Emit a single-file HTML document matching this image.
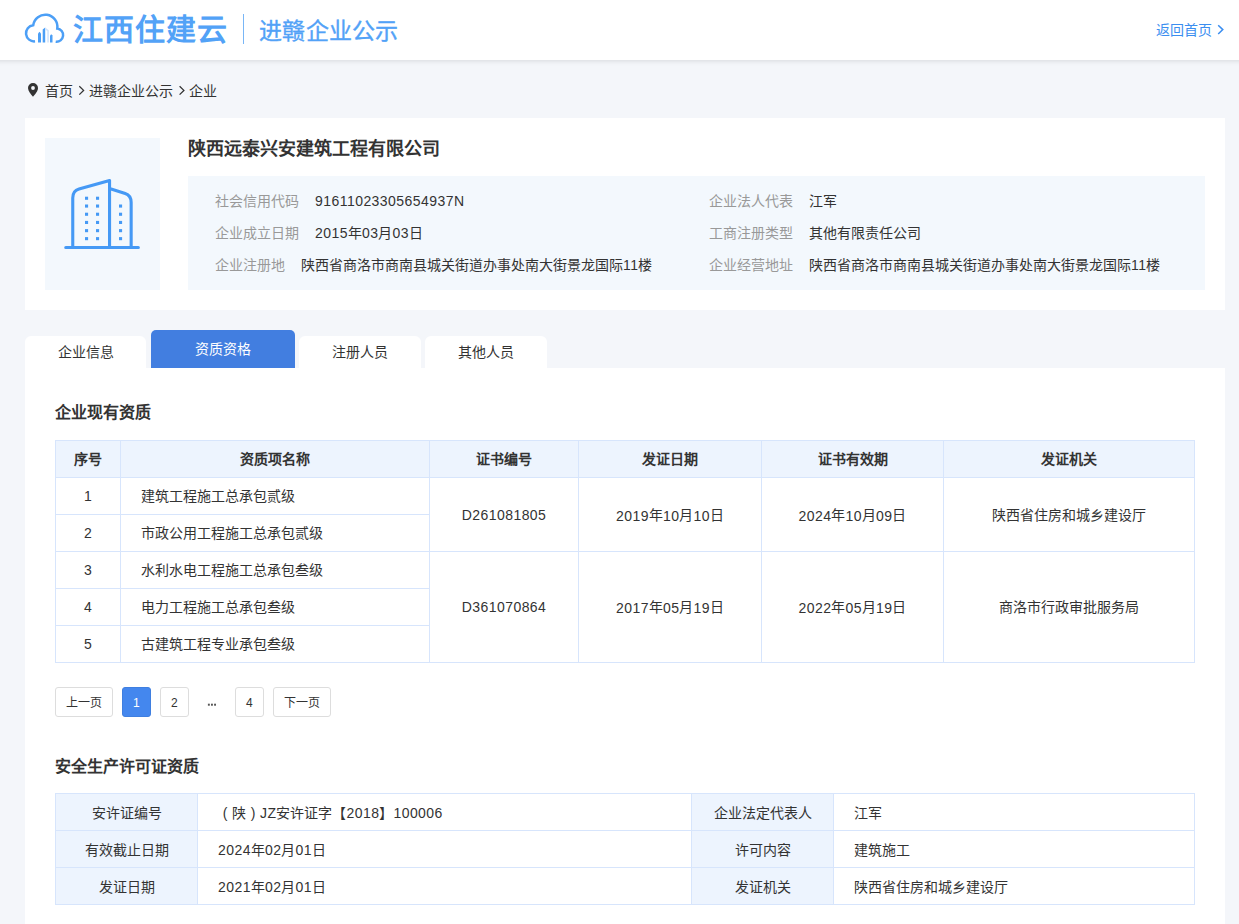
<!DOCTYPE html>
<html lang="zh-CN">
<head>
<meta charset="utf-8">
<style>
*{box-sizing:border-box;margin:0;padding:0}
html,body{width:1239px;height:924px;overflow:hidden}
body{background:#f4f6fa;font-family:"Liberation Sans",sans-serif;font-size:14px;color:#333;position:relative}
.abs{position:absolute}
#hdr{left:0;top:0;width:1239px;height:60px;background:#fff;z-index:2}
#shd{left:-20px;top:0;width:1279px;height:60px;box-shadow:0 1px 5px rgba(0,0,0,.12);z-index:1}
#logo-t{left:73px;top:11.5px;letter-spacing:1px;font-size:30px;font-weight:bold;color:#52a2f7;line-height:36px;white-space:nowrap}
#logo-d{left:243px;top:14px;width:1px;height:30px;background:#79b6f6}
#logo-s{left:259px;top:16px;font-size:23px;color:#52a2f7;line-height:30px;white-space:nowrap;-webkit-text-stroke:.35px #52a2f7;letter-spacing:.25px}
#back{left:1156px;top:20px;font-size:14px;color:#3b8ef0;line-height:20px;white-space:nowrap}
#crumb{left:45px;top:81px;line-height:20px;white-space:nowrap;color:#333}
#card{left:25px;top:118px;width:1200px;height:192px;background:#fff}
#ibox{left:20px;top:20px;width:115px;height:152px;background:#f3f8fd}
#ctitle{left:163px;top:18px;font-size:18px;font-weight:bold;line-height:26px;color:#333;white-space:nowrap}
#info{left:163px;top:58px;width:1017px;height:114px;background:#f3f8fd}
.row{position:absolute;height:20px;line-height:20px;white-space:nowrap}
.lb{color:#999;margin-right:16px}
.tab{position:absolute;top:336px;width:122px;height:32px;background:#fff;border-radius:6px 6px 0 0;text-align:center;line-height:32px;color:#333}
.tab.on{top:330px;height:38px;width:144px;background:#427ee0;color:#fff;line-height:38px;border-radius:5px 5px 0 0}
#panel{left:25px;top:368px;width:1200px;height:600px;background:#fff}
.sec{position:absolute;left:30px;font-size:16px;font-weight:bold;line-height:22px;color:#333;white-space:nowrap}
table{border-collapse:collapse;position:absolute;left:30px;table-layout:fixed}
td,th{border:1px solid #d7e5fc;height:37px;padding:0;font-size:14px;color:#333;white-space:nowrap}
th{background:#edf4fe;font-weight:bold;text-align:center}
td.c{text-align:center}
.t1 td,.t1 th{padding-bottom:2px}
.t1 .n{position:relative;top:1px}
td.l{padding-left:20px;text-align:left}
td.h{background:#edf4fe;text-align:center}
.pg{position:absolute;top:319px;height:30px;border:1px solid #ddd;border-radius:3px;text-align:center;line-height:30px;font-size:12px;color:#333;background:#fff}
.pg.on{background:#4487ee;border-color:#3f7fe0;color:#fff}
.n{font-style:normal;letter-spacing:.45px}
.fp{font-style:normal;display:inline-block;width:14px;text-align:center}
</style>
</head>
<body>
<div id="shd" class="abs"></div>
<div id="hdr" class="abs">
  <svg class="abs" style="left:0;top:0" width="80" height="60" viewBox="0 0 80 60">
    <path d="M35.05 41.32 A8.1 8.1 0 0 1 33.2 25.2 A12 12 0 0 1 57.3 28.6 A6.6 6.6 0 1 1 55.7 41.74" fill="none" stroke="#4c9ff6" stroke-width="2.5"/>
    <path d="M38 42.6 V33.4 L39.5 31.8 L41 33.4 V42.6 Z" fill="#4c9ff6"/>
    <path d="M42.7 42.6 V29.6 L45.2 27.6 V42.6 Z" fill="#4c9ff6"/>
    <path d="M45.2 27.6 L48.8 30.2 V42.6 H47.3 V31 L45.2 29.4 Z" fill="#cfe3fc"/>
    <path d="M50 42.6 V35.6 L51.25 34.2 L52.5 35.6 V42.6 Z" fill="#4c9ff6"/>
  </svg>
  <div id="logo-t" class="abs">江西住建云</div>
  <div id="logo-d" class="abs"></div>
  <div id="logo-s" class="abs">进赣企业公示</div>
  <div id="back" class="abs">返回首页</div>
  <svg class="abs" style="left:1210px;top:20px" width="20" height="20" viewBox="1210 20 20 20"><path d="M1218.2 25.2 L1222.8 29.6 L1218.2 34" fill="none" stroke="#3b8ef0" stroke-width="1.5"/></svg>
</div>

<svg class="abs" style="left:0;top:70px" width="200" height="40" viewBox="0 70 200 40">
  <path fill="#333" fill-rule="evenodd" d="M33 83 A5 5 0 0 1 38 88 C38 91 35.2 94.3 33 96.7 C30.8 94.3 28 91 28 88 A5 5 0 0 1 33 83 Z M33 86.1 A1.9 1.9 0 1 0 33 89.9 A1.9 1.9 0 1 0 33 86.1 Z"/>
  <path d="M79.3 86.2 L83.6 90.4 L79.3 94.6 M179.6 86.2 L183.9 90.4 L179.6 94.6" fill="none" stroke="#333" stroke-width="1.3"/>
</svg>
<div id="crumb" class="abs"><span>首页</span><span style="margin-left:16px">进赣企业公示</span><span style="margin-left:16px">企业</span></div>

<div id="card" class="abs">
  <div id="ibox" class="abs"></div>
  <svg class="abs" style="left:0;top:0" width="160" height="192" viewBox="25 118 160 192">
    <path d="M72.75 247.5 V198 Q72.75 190.8 79 189 L109.55 180.5 V247.5 M109.55 188.6 L125.2 193.6 Q131.15 195.6 131.15 202.5 V247.5 M65.75 247.5 H138.35" fill="none" stroke="#4599f5" stroke-width="3.1" stroke-linecap="round" stroke-linejoin="round"/>
    <g fill="#4599f5">
      <rect x="85" y="196.7" width="3.1" height="3.1"/><rect x="96" y="196.7" width="3.1" height="3.1"/>
      <rect x="85" y="204.5" width="3.1" height="3.1"/><rect x="96" y="204.5" width="3.1" height="3.1"/><rect x="119" y="204.5" width="3.1" height="3.1"/>
      <rect x="85" y="212.7" width="3.1" height="3.1"/><rect x="96" y="212.7" width="3.1" height="3.1"/><rect x="119" y="212.7" width="3.1" height="3.1"/>
      <rect x="85" y="220.9" width="3.1" height="3.1"/><rect x="96" y="220.9" width="3.1" height="3.1"/><rect x="119" y="220.9" width="3.1" height="3.1"/>
      <rect x="85" y="229.1" width="3.1" height="3.1"/><rect x="96" y="229.1" width="3.1" height="3.1"/><rect x="119" y="229.1" width="3.1" height="3.1"/>
      <rect x="85" y="237.1" width="3.1" height="3.1"/><rect x="96" y="237.1" width="3.1" height="3.1"/><rect x="119" y="237.1" width="3.1" height="3.1"/>
    </g>
  </svg>
  <div id="ctitle" class="abs">陕西远泰兴安建筑工程有限公司</div>
  <div id="info" class="abs">
    <div class="row" style="left:27px;top:15px"><span class="lb">社会信用代码</span><i class="n">91611023305654937N</i></div>
    <div class="row" style="left:27px;top:47px"><span class="lb">企业成立日期</span><i class="n">2015</i>年<i class="n">03</i>月<i class="n">03</i>日</div>
    <div class="row" style="left:27px;top:79px"><span class="lb">企业注册地</span>陕西省商洛市商南县城关街道办事处南大街景龙国际<i class="n">11</i>楼</div>
    <div class="row" style="left:521px;top:15px"><span class="lb">企业法人代表</span>江军</div>
    <div class="row" style="left:521px;top:47px"><span class="lb">工商注册类型</span>其他有限责任公司</div>
    <div class="row" style="left:521px;top:79px"><span class="lb">企业经营地址</span>陕西省商洛市商南县城关街道办事处南大街景龙国际<i class="n">11</i>楼</div>
  </div>
</div>

<div class="tab" style="left:25px;width:121px">企业信息</div>
<div class="tab on" style="left:151px">资质资格</div>
<div class="tab" style="left:299px">注册人员</div>
<div class="tab" style="left:425px">其他人员</div>

<div id="panel" class="abs">
  <div class="sec" style="top:34px">企业现有资质</div>
  <table class="t1" style="top:72px;width:1140px">
    <colgroup><col style="width:65px"><col style="width:309px"><col style="width:149px"><col style="width:183px"><col style="width:182px"><col style="width:251px"></colgroup>
    <tr><th>序号</th><th>资质项名称</th><th>证书编号</th><th>发证日期</th><th>证书有效期</th><th>发证机关</th></tr>
    <tr><td class="c"><i class="n">1</i></td><td class="l">建筑工程施工总承包贰级</td><td class="c" rowspan="2"><i class="n">D261081805</i></td><td class="c" rowspan="2"><i class="n">2019</i>年<i class="n">10</i>月<i class="n">10</i>日</td><td class="c" rowspan="2"><i class="n">2024</i>年<i class="n">10</i>月<i class="n">09</i>日</td><td class="c" rowspan="2">陕西省住房和城乡建设厅</td></tr>
    <tr><td class="c"><i class="n">2</i></td><td class="l">市政公用工程施工总承包贰级</td></tr>
    <tr><td class="c"><i class="n">3</i></td><td class="l">水利水电工程施工总承包叁级</td><td class="c" rowspan="3"><i class="n">D361070864</i></td><td class="c" rowspan="3"><i class="n">2017</i>年<i class="n">05</i>月<i class="n">19</i>日</td><td class="c" rowspan="3"><i class="n">2022</i>年<i class="n">05</i>月<i class="n">19</i>日</td><td class="c" rowspan="3">商洛市行政审批服务局</td></tr>
    <tr><td class="c"><i class="n">4</i></td><td class="l">电力工程施工总承包叁级</td></tr>
    <tr><td class="c"><i class="n">5</i></td><td class="l">古建筑工程专业承包叁级</td></tr>
  </table>

  <div class="pg" style="left:30px;width:58px">上一页</div>
  <div class="pg on" style="left:97px;width:29px"><i class="n">1</i></div>
  <div class="pg" style="left:135px;width:29px"><i class="n">2</i></div>
  <svg class="abs" style="left:173px;top:319px" width="28" height="30" viewBox="198 687 28 30"><g fill="#555"><rect x="207.9" y="703.7" width="1.9" height="2"/><rect x="211" y="703.7" width="1.9" height="2"/><rect x="214.1" y="703.7" width="1.9" height="2"/></g></svg>
  <div class="pg" style="left:210px;width:29px"><i class="n">4</i></div>
  <div class="pg" style="left:248px;width:58px">下一页</div>

  <div class="sec" style="top:388px">安全生产许可证资质</div>
  <table style="top:425px;width:1140px">
    <colgroup><col style="width:142px"><col style="width:494px"><col style="width:142px"><col style="width:361px"></colgroup>
    <tr><td class="h">安许证编号</td><td class="l"><i class="fp">(</i>陕<i class="fp">)</i><i class="n">JZ</i>安许证字【<i class="n">2018</i>】<i class="n">100006</i></td><td class="h">企业法定代表人</td><td class="l">江军</td></tr>
    <tr><td class="h">有效截止日期</td><td class="l"><i class="n">2024</i>年<i class="n">02</i>月<i class="n">01</i>日</td><td class="h">许可内容</td><td class="l">建筑施工</td></tr>
    <tr><td class="h">发证日期</td><td class="l"><i class="n">2021</i>年<i class="n">02</i>月<i class="n">01</i>日</td><td class="h">发证机关</td><td class="l">陕西省住房和城乡建设厅</td></tr>
  </table>
</div>
</body>
</html>
